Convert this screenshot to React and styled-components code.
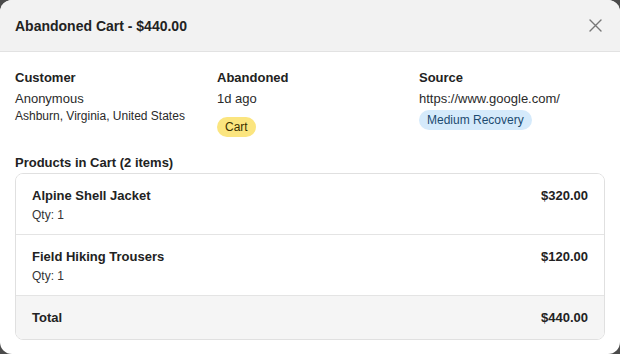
import React from 'react'
import styled, { createGlobalStyle } from 'styled-components'

const GlobalStyle = createGlobalStyle`
  html, body {
    margin: 0;
    padding: 0;
    background: #4b4b4b;
    font-family: "Liberation Sans", Arial, sans-serif;
    color: #222;
  }
`

const Modal = styled.div`
  width: 620px;
  height: 354px;
  background: #fff;
  border-radius: 12px;
  overflow: hidden;
  display: flex;
  flex-direction: column;
`

const Header = styled.header`
  height: 51px;
  background: #f2f2f2;
  border-bottom: 1px solid #e2e2e2;
  display: flex;
  align-items: center;
  justify-content: space-between;
  padding: 0 18px 0 15px;
  flex-shrink: 0;
`

const Title = styled.h2`
  margin: 0;
  font-size: 14px;
  font-weight: 700;
  color: #222;
`

const Close = styled.button`
  border: 0;
  background: none;
  padding: 0;
  width: 14px;
  height: 14px;
  display: flex;
  align-items: center;
  justify-content: center;
  color: #777;
  cursor: pointer;
`

const Body = styled.div`
  padding: 16px 15px 0;
`

const Info = styled.div`
  display: grid;
  grid-template-columns: repeat(3, 1fr);
  column-gap: 16px;
`

const Field = styled.div`
  display: flex;
  flex-direction: column;
  align-items: flex-start;
`

const Label = styled.div`
  font-size: 13px;
  font-weight: 700;
  line-height: 20px;
  margin-bottom: 1px;
`

const Value = styled.div`
  font-size: ${p => (p.small ? '12px' : '13px')};
  line-height: ${p => (p.small ? '16px' : '20px')};
  margin-top: ${p => (p.small ? '-1px' : '0')};
  color: #2a2a2a;
`

const Badge = styled.span`
  display: inline-block;
  font-size: 12px;
  line-height: 20px;
  padding: 0 8px;
  border-radius: 10px;
  margin-top: ${p => p.mt || 0}px;
  background: ${p => (p.tone === 'blue' ? '#d5eafb' : '#fbe57f')};
  color: ${p => (p.tone === 'blue' ? '#1c4a70' : '#3a3000')};
`

const SectionTitle = styled.div`
  font-size: 13px;
  font-weight: 700;
  line-height: 20px;
  margin-top: 16px;
`

const Table = styled.div`
  border: 1px solid #e0e0e0;
  border-radius: 8px;
  overflow: hidden;
`

const Row = styled.div`
  display: flex;
  justify-content: space-between;
  align-items: flex-start;
  box-sizing: border-box;
  padding: 12px 16px 0 16px;
  height: ${p => (p.first ? '60px' : '61px')};
  border-top: ${p => (p.first ? '0' : '1px solid #e4e4e4')};
  background: #fff;
`

const TotalRow = styled.div`
  display: flex;
  justify-content: space-between;
  align-items: center;
  box-sizing: border-box;
  height: 44px;
  padding: 0 16px;
  border-top: 1px solid #e4e4e4;
  background: #f5f5f5;
`

const Name = styled.div`
  font-size: 13px;
  font-weight: 700;
  line-height: 20px;
  color: #222;
`

const Qty = styled.div`
  font-size: 12px;
  line-height: 18px;
  color: #333;
`

const Price = styled.div`
  font-size: 13px;
  font-weight: 700;
  line-height: 20px;
  color: #222;
`

const items = [
  { name: 'Alpine Shell Jacket', qty: 1, price: '$320.00' },
  { name: 'Field Hiking Trousers', qty: 1, price: '$120.00' },
]

export default function App() {
  return (
    <>
      <GlobalStyle />
      <Modal>
        <Header>
          <Title>Abandoned Cart - $440.00</Title>
          <Close aria-label="Close">
            <svg width="13" height="13" viewBox="0 0 13 13" fill="none" stroke="currentColor" strokeWidth="1.4" strokeLinecap="round">
              <path d="M1 1l11 11M12 1L1 12" />
            </svg>
          </Close>
        </Header>
        <Body>
          <Info>
            <Field>
              <Label>Customer</Label>
              <Value>Anonymous</Value>
              <Value small>Ashburn, Virginia, United States</Value>
            </Field>
            <Field>
              <Label>Abandoned</Label>
              <Value>1d ago</Value>
              <Badge mt={8}>Cart</Badge>
            </Field>
            <Field>
              <Label>Source</Label>
              <Value>https://www.google.com/</Value>
              <Badge tone="blue" mt={1}>Medium Recovery</Badge>
            </Field>
          </Info>
          <SectionTitle>Products in Cart (2 items)</SectionTitle>
          <Table>
            {items.map((it, i) => (
              <Row key={it.name} first={i === 0}>
                <div>
                  <Name>{it.name}</Name>
                  <Qty>Qty: {it.qty}</Qty>
                </div>
                <Price>{it.price}</Price>
              </Row>
            ))}
            <TotalRow>
              <Name>Total</Name>
              <Price>$440.00</Price>
            </TotalRow>
          </Table>
        </Body>
      </Modal>
    </>
  )
}
